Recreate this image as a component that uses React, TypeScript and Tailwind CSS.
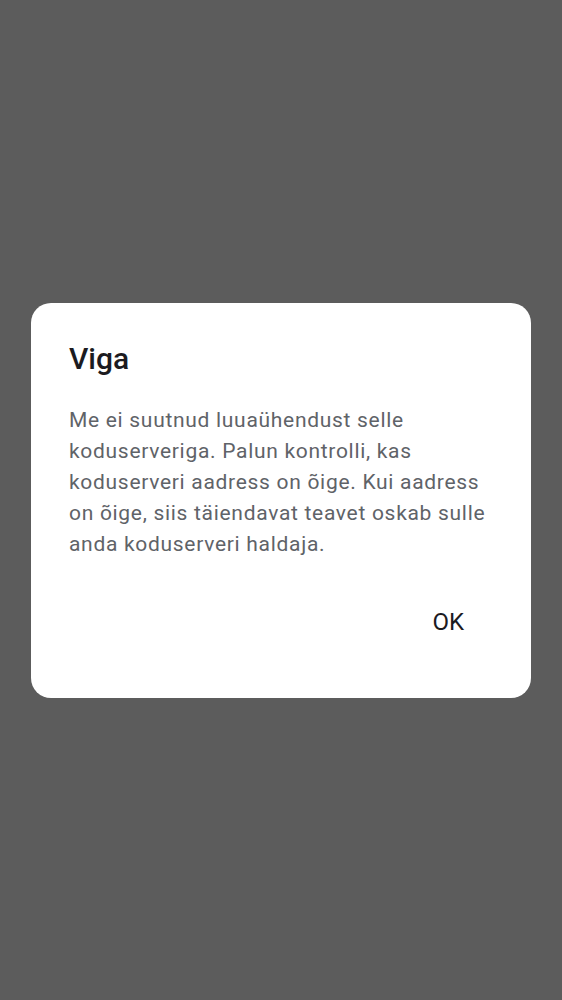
export default function App() {
  return (
    <div className="flex h-[1000px] w-full items-center justify-center bg-[#5c5c5c] font-['Roboto',sans-serif]">
      <div className="w-[500px] rounded-[20px] bg-white pb-[56px] pl-[38px] pr-[38px] pt-[34px]">
        <h2 className="text-[30px] font-medium leading-[44px] text-[#1c1b1f]">Viga</h2>
        <p className="mt-[24px] text-[21px] leading-[31px] tracking-[0.7px] text-[#5f6368]">
          Me ei suutnud luuaühendust selle koduserveriga. Palun kontrolli, kas koduserveri aadress on õige. Kui aadress on õige, siis täiendavat teavet oskab sulle anda koduserveri haldaja.
        </p>
        <div className="mt-[42px] flex justify-end">
          <button className="px-[29px] text-[24px] leading-[40px] text-[#1c1b1f]">OK</button>
        </div>
      </div>
    </div>
  )
}
